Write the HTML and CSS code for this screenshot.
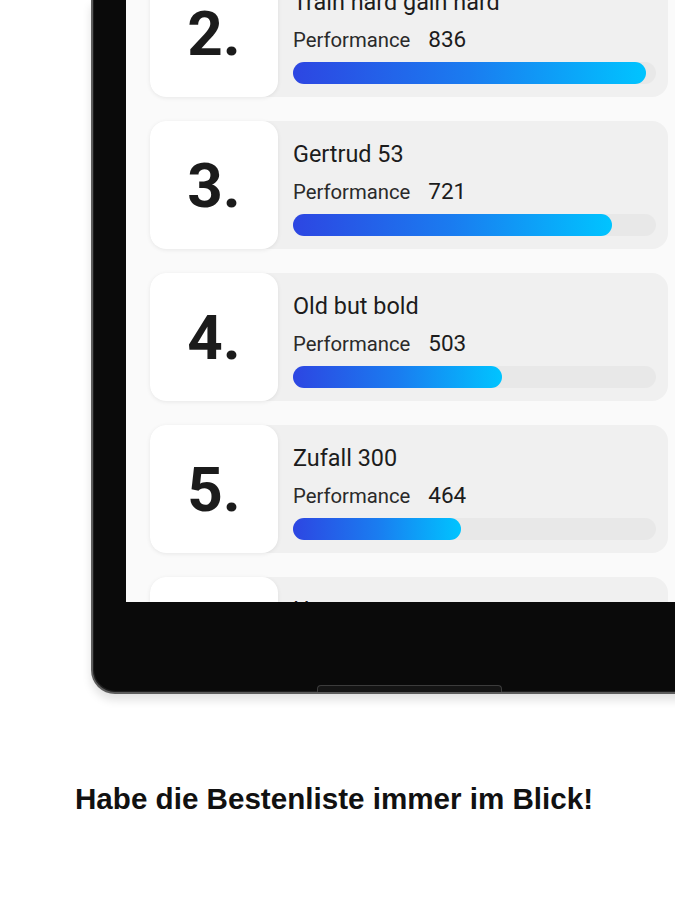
FILE: index.html
```html
<!DOCTYPE html>
<html lang="de">
<head>
<meta charset="utf-8">
<title>Bestenliste</title>
<link rel="stylesheet" href="styles.css">
</head>
<body>
<div class="stage">
  <div class="device">
    <div class="screen">
      <div class="list">
        <div class="card">
          <div class="rank">2.</div>
          <div class="info">
            <div class="name">Train hard gain hard</div>
            <div class="perf"><span class="label">Performance</span><span class="value">836</span></div>
            <div class="track"><div class="bar" style="width:97.2%"></div></div>
          </div>
        </div>
        <div class="card">
          <div class="rank">3.</div>
          <div class="info">
            <div class="name">Gertrud 53</div>
            <div class="perf"><span class="label">Performance</span><span class="value">721</span></div>
            <div class="track"><div class="bar" style="width:87.9%"></div></div>
          </div>
        </div>
        <div class="card">
          <div class="rank">4.</div>
          <div class="info">
            <div class="name">Old but bold</div>
            <div class="perf"><span class="label">Performance</span><span class="value">503</span></div>
            <div class="track"><div class="bar" style="width:57.6%"></div></div>
          </div>
        </div>
        <div class="card">
          <div class="rank">5.</div>
          <div class="info">
            <div class="name">Zufall 300</div>
            <div class="perf"><span class="label">Performance</span><span class="value">464</span></div>
            <div class="track"><div class="bar" style="width:46.3%"></div></div>
          </div>
        </div>
        <div class="card">
          <div class="rank">6.</div>
          <div class="info">
            <div class="name">Hannes</div>
            <div class="perf"><span class="label">Performance</span><span class="value">410</span></div>
            <div class="track"><div class="bar" style="width:40%"></div></div>
          </div>
        </div>
      </div>
    </div>
    <div class="home-lip"></div>
  </div>
  <p class="caption">Habe die Bestenliste immer im Blick!</p>
</div>
</body>
</html>
```

FILE: styles.css
```css
html, body {
  margin: 0;
  padding: 0;
  background: #ffffff;
}

.stage {
  width: 675px;
  height: 900px;
  overflow: hidden;
  background: #ffffff;
  font-family: Roboto, "Noto Sans", sans-serif;
}

.device {
  position: relative;
  margin-left: 91px;
  width: 640px;
  background: #0a0a0a;
  border: 2px solid #5c5c5c;
  border-top: 0;
  border-right: 0;
  border-bottom-left-radius: 24px;
  padding: 0 0 90px 33px;
  box-shadow: 0 6px 10px rgba(0, 0, 0, 0.12), inset 1px -1px 0 #1e1e1e;
}

.screen {
  height: 602px;
  background: #fafafa;
  overflow: hidden;
  padding-left: 24px;
}

.list {
  display: flex;
  flex-direction: column;
  gap: 24px;
  margin-top: -31px;
}

.card {
  display: flex;
  width: 518px;
  height: 128px;
  background: #f0f0f0;
  border-radius: 16px;
}

.rank {
  flex: 0 0 128px;
  height: 128px;
  background: #ffffff;
  border-radius: 16px;
  box-shadow: 0 1px 4px rgba(0, 0, 0, 0.08);
  display: flex;
  align-items: center;
  justify-content: center;
  font-size: 62px;
  font-weight: 700;
  color: #1b1b1b;
}

.info {
  flex: 1;
  padding: 20px 12px 0 15px;
  display: flex;
  flex-direction: column;
}

.name {
  font-size: 23.4px;
  line-height: 26px;
  color: #1c1c1c;
  white-space: nowrap;
}

.perf {
  margin-top: 11px;
  display: flex;
  align-items: baseline;
  gap: 18px;
  line-height: 26px;
}

.label {
  font-size: 20.3px;
  color: #2a2a2a;
}

.value {
  font-size: 22.5px;
  color: #1c1c1c;
}

.track {
  margin-top: 9px;
  height: 22px;
  border-radius: 11px;
  background: #e8e8e8;
}

.bar {
  height: 22px;
  border-radius: 11px;
  background: linear-gradient(90deg, #2d46e2 0%, #1a7cf0 50%, #00c4ff 100%);
}

.home-lip {
  position: absolute;
  left: 224px;
  bottom: 0;
  width: 183px;
  height: 6px;
  background: #151515;
  border: 1px solid #3c3c3c;
  border-bottom: 0;
  border-radius: 4px 4px 0 0;
}

.caption {
  margin: 88px 0 0 75px;
  font-family: "Liberation Sans", Arial, sans-serif;
  font-weight: 700;
  font-size: 29.6px;
  line-height: 34px;
  color: #111111;
}
```
